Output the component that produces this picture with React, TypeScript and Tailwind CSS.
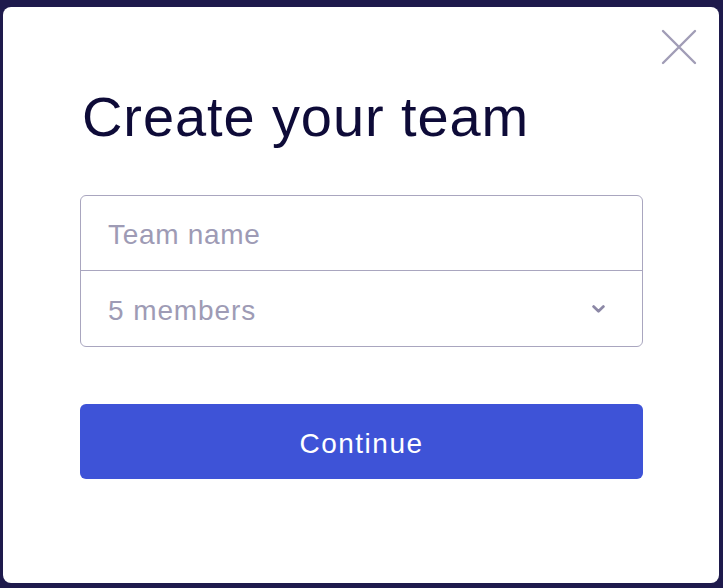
import React from 'react';

const font = { fontFamily: '"Liberation Sans", Arial, sans-serif' };

const CloseIcon = () => (
  <svg width="36" height="36" viewBox="0 0 36 36" fill="none">
    <path d="M2 2L34 34M34 2L2 34" stroke="#a19db6" strokeWidth="2.4" strokeLinecap="round" />
  </svg>
);

const Chevron = () => (
  <svg width="13" height="8" viewBox="0 0 13 8" fill="none">
    <path d="M1.6 1.6L6.5 6.2L11.4 1.6" stroke="#8c88a6" strokeWidth="2.8" strokeLinecap="round" strokeLinejoin="round" />
  </svg>
);

export default function App() {
  return (
    <div className="min-h-screen w-full bg-[#1e1a4c] pt-[7px] pl-[3px]" style={font}>
      <div className="relative w-[716px] h-[576px] bg-white rounded-lg pl-[77px] pt-[82px]">
        <button className="absolute top-[22px] right-[22px]" aria-label="Close">
          <CloseIcon />
        </button>

        <h1 className="pl-[2px] text-[56px] leading-none font-normal text-[#0e0b38] tracking-[0.9px]">
          Create your team
        </h1>

        <div className="mt-[50px] w-[563px] border border-[#a9a6bf] rounded-md">
          <div className="h-[75px] border-b border-[#a9a6bf] flex items-center px-[27px]">
            <span className="text-[28px] leading-none pt-1 text-[#9e9bb5] tracking-[0.7px]">Team name</span>
          </div>
          <div className="h-[75px] flex items-center justify-between pl-[27px] pr-[37px]">
            <span className="text-[28px] leading-none pt-1 text-[#9e9bb5] tracking-[0.9px]">5 members</span>
            <Chevron />
          </div>
        </div>

        <button className="mt-[57px] w-[563px] h-[75px] rounded-md bg-[#3e53d7] flex items-center justify-center">
          <span className="text-[28px] leading-none pt-1 text-white tracking-[1.5px]">Continue</span>
        </button>
      </div>
    </div>
  );
}
